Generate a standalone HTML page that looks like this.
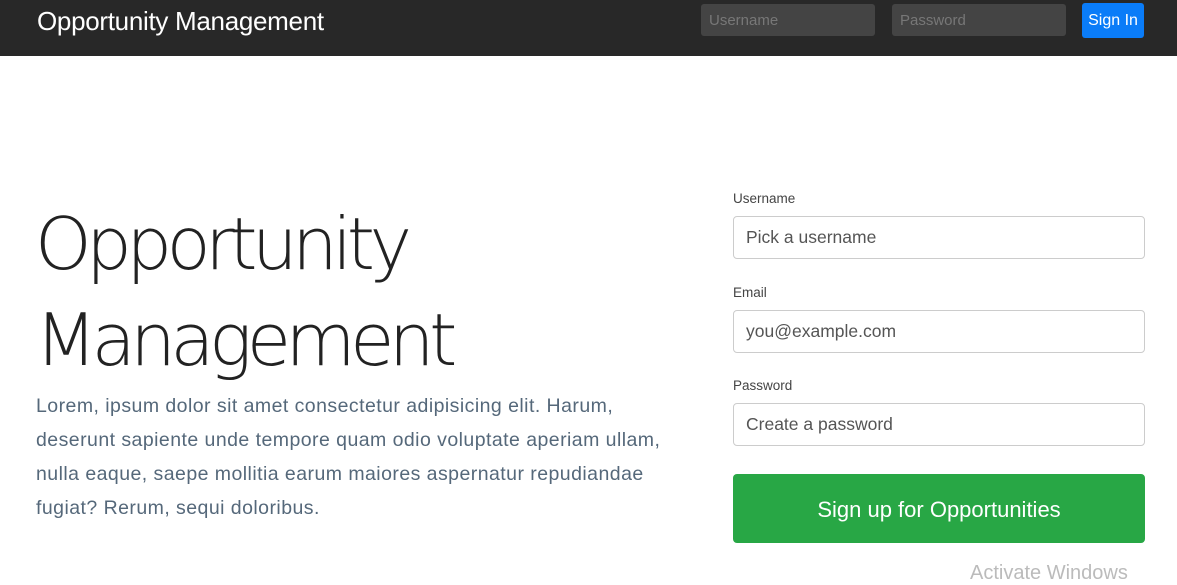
<!DOCTYPE html>
<html><head><style>
*{box-sizing:border-box;margin:0;padding:0}
body{width:1177px;height:571px;overflow:hidden;background:#fff;font-family:"Liberation Sans",sans-serif;position:relative}
.nav{position:absolute;left:0;top:0;width:1177px;height:56px;background:#282828}
.brand{position:absolute;left:37px;top:6px;color:#fff;font-size:26px;letter-spacing:-0.3px}
.ni{position:absolute;top:4px;width:174px;height:32px;background:#444;border-radius:3px;color:#777;font-size:15px;padding:8px 8px}
.sbtn{position:absolute;left:1082px;top:3px;width:62px;height:35px;background:#0a7cf8;border-radius:3px;color:#fff;font-size:16px;text-align:center;line-height:36px}
h1{position:absolute;left:35px;top:196px;font-family:"DejaVu Sans ExtraLight","DejaVu Sans","Liberation Sans",sans-serif;font-weight:200;font-size:72px;line-height:96px;color:#222;letter-spacing:-5.5px}
p{position:absolute;left:36px;top:389px;width:700px;white-space:nowrap;font-size:19.5px;line-height:34px;color:#55687a;letter-spacing:0.45px}
label{position:absolute;left:733px;font-size:13.5px;color:#444}
.in{position:absolute;left:733px;width:412px;height:43px;border:1px solid #ccc;border-radius:4px;font-size:17.5px;color:#555;padding:10px 12px}
.go{position:absolute;left:733px;top:474px;width:412px;height:69px;background:#28a745;border-radius:4px;color:#fff;font-size:22px;text-align:center;line-height:71px}
.wm{position:absolute;left:970px;top:562px;color:#bbb;font-size:20px}
</style></head><body>
<div class="nav">
<div class="brand">Opportunity Management</div>
<div class="ni" style="left:701px">Username</div>
<div class="ni" style="left:892px">Password</div>
<div class="sbtn">Sign In</div>
</div>
<h1>Opportunity<br>Management</h1>
<p>Lorem, ipsum dolor sit amet consectetur adipisicing elit. Harum,<br>deserunt sapiente unde tempore quam odio voluptate aperiam ullam,<br>nulla eaque, saepe mollitia earum maiores aspernatur repudiandae<br>fugiat? Rerum, sequi doloribus.</p>
<label style="top:191px">Username</label>
<div class="in" style="top:216px">Pick a username</div>
<label style="top:285px">Email</label>
<div class="in" style="top:310px">you@example.com</div>
<label style="top:378px">Password</label>
<div class="in" style="top:403px">Create a password</div>
<div class="go">Sign up for Opportunities</div>
<div class="wm">Activate Windows</div>
</body></html>
